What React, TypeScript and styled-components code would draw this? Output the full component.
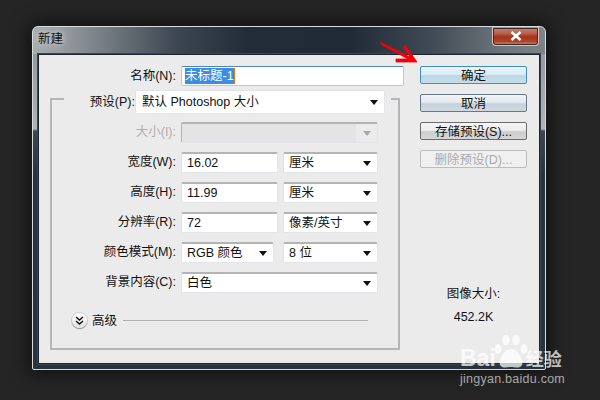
import React from "react";
import styled, { createGlobalStyle } from "styled-components";

const Global = createGlobalStyle`
  html, body { margin: 0; padding: 0; background: #252525; }
  body { width: 600px; height: 400px; overflow: hidden; font-family: "Liberation Sans", "Noto Sans CJK SC", sans-serif; }
`;
const Page = styled.div`
  position: relative; width: 600px; height: 400px; box-sizing: border-box; padding: 26px 0 0 32px;
  background: #252525;
`;
const Win = styled.div`
  width: 514px; height: 344px; box-sizing: border-box; border: 1px solid #d8dcdf; border-radius: 6px 6px 2px 2px;
  padding: 0 5px 5px;
  display: flex; flex-direction: column;
  box-shadow: 0 0 18px 4px rgba(0,0,0,.55);
  background:
    linear-gradient(90deg, #a9adb0 0, #8d9398 8%, #3d4751 28%, #212c38 42%, #202b37 62%, #414b55 78%, #6f767c 92%, #7d8387 100%) top/100% 27px no-repeat,
    linear-gradient(180deg, #8b9196 0, #b0b3b6 102px, #3b4650 104px, #27323d 150px, #28333e 100%);
`;
const Title = styled.div`
  height: 26px; flex: none; display: flex; justify-content: space-between; align-items: flex-start;
  font-size: 12.5px; line-height: 25px; color: #111;
`;
const TitleText = styled.span`
  text-shadow: 0 0 6px #cfd2d4, 0 0 10px #cfd2d4;
`;
const CloseBtn = styled.div`
  width: 47px; height: 19px; box-sizing: border-box; margin-right: 1px; border: 1px solid #d9c7c2; border-top: 0;
  border-radius: 0 0 4px 4px; outline: 1px solid #3a2a26; outline-offset: -2px;
  background: linear-gradient(180deg, #c8897a 0, #b9614c 35%, #a3331c 55%, #ae452d 80%, #c98a75 100%);
  display: flex; align-items: center; justify-content: center;
`;
const Panel = styled.div`
  flex: 1; min-height: 0; background: #ebebeb; border: 1px solid #1d2630; box-shadow: 0 0 0 1px #3a4550;
  position: relative; display: flex; padding: 11px 12px 0 11px; box-sizing: border-box;
  margin-top: 1px; color: #111; font-size: 12.5px;
`;
const Left = styled.div`
  width: 351px; flex: none; display: flex; flex-direction: column;
`;
const NameRow = styled.div`
  display: flex; align-items: center; gap: 5px; height: 20px;
`;
const Label = styled.label<{ $w?: number; $off?: boolean }>`
  width: ${p => p.$w ?? 126}px; flex: none; text-align: right; line-height: 21px; white-space: nowrap;
  color: ${p => (p.$off ? "#aeaeae" : "#111")};
`;
const NameInput = styled.div`
  width: 223px; height: 20px; box-sizing: border-box; margin-right: -5px; background: #fff; flex: none;
  border: 1px solid #aecde6; border-top-color: #4f86b4; border-radius: 2px; padding: 1px 3px;
  line-height: 16px;
`;
const Selected = styled.span`
  display: inline-block; background: #3a8ee6; color: #fff; height: 16px; line-height: 16px; border-right: 1px solid #e5760f;
`;
const GroupHead = styled.div`
  display: flex; align-items: flex-start; height: 24px; margin-top: 4px;
`;
const Cap = styled.div<{ $w: number; $right?: boolean }>`
  width: ${p => p.$w}px; flex: none; height: 16px; margin-top: 8px; box-sizing: border-box;
  border-top: 2px solid #b6b6b6;
  ${p => (p.$right ? "border-right: 2px solid #b6b6b6; margin-left: 6px;" : "border-left: 2px solid #b6b6b6;")}
`;
const PresetLabel = styled.label`
  width: 71px; flex: none; text-align: right; line-height: 25px; white-space: nowrap; margin-right: 0;
`;
const Group = styled.div`
  width: 350px; height: 236px; box-sizing: border-box; border: 2px solid #b6b6b6; border-top: 0;
  display: flex; flex-direction: column; padding-top: 8px;
`;
const Row = styled.div<{ $mt?: number }>`
  display: flex; align-items: center; gap: 5px; height: 21px; margin-top: ${p => p.$mt ?? 9}px;
`;
const Box = styled.div<{ $w: number; $off?: boolean; $h?: number; $ml?: number }>`
  width: ${p => p.$w}px; height: ${p => p.$h ?? 21}px; box-sizing: border-box; flex: none; display: flex; align-items: center;
  justify-content: space-between; padding: 0 5px 0 5px; white-space: nowrap; line-height: 18px;
  margin-left: ${p => p.$ml ?? 0}px;
  background: ${p => (p.$off ? "linear-gradient(90deg, #e4e4e4 0, #e4e4e4 89%, #ebebeb 89%)" : "#fff")};
  border: 1px solid #e2e5ea; border-top: 2px solid ${p => (p.$off ? "#b3b3b3" : "#b4b4b4")}; border-left: 1px solid ${p => (p.$off ? "#b3b3b3" : "#dfe2e6")};
  border-radius: 2px;
`;
const Tri = styled.i<{ $off?: boolean }>`
  display: block; width: 0; height: 0; flex: none; margin-right: 1px;
  border: 4px solid transparent; border-bottom: 0;
  border-top: 5px solid ${p => (p.$off ? "#a9a9a9" : "#111")};
`;
const PresetBox = styled(Box)`
  border-top: 1px solid #dfe2e6; padding-left: 6px;
`;
const Advanced = styled.div`
  display: flex; align-items: center; height: 18px; margin-top: 18px; padding-left: 20px; gap: 5px;
`;
const Chevron = styled.div`
  width: 15px; height: 15px; border-radius: 50%; flex: none;
  background: linear-gradient(180deg, #fff, #e2e2e2); box-shadow: 0 1px 1px #8a8a8a, 0 0 0 1px #d0d0d0;
  display: flex; align-items: center; justify-content: center;
`;
const AdvLabel = styled.span`
  line-height: 18px; white-space: nowrap; padding-top: 2px;
`;
const Rule = styled.div`
  width: 245px; height: 1px; background: #b0b0b0; margin-left: 1px;
`;
const Right = styled.div`
  margin-left: 19px; width: 107px; flex: none; display: flex; flex-direction: column; align-items: stretch;
`;
const Btn = styled.div<{ $kind: "default" | "blue" | "gray" | "off" }>`
  height: 18px; box-sizing: border-box; margin-bottom: 10px; text-align: center; line-height: 18px; white-space: nowrap;
  border-radius: 2px;
  border: 1px solid ${p => ({ default: "#3d8fc4", blue: "#67788a", gray: "#6b6b6b", off: "#bdbdbd" }[p.$kind])};
  color: ${p => (p.$kind === "off" ? "#aaa" : "#111")};
  background: ${p => ({
    default: "linear-gradient(180deg,#eaf5fa 0,#dcedf4 45%,#bcd6e4 55%,#c6dfeb 100%)",
    blue: "linear-gradient(180deg,#f0f3f6 0,#e5eaee 45%,#c5d1da 55%,#cfd9e0 100%)",
    gray: "linear-gradient(180deg,#f6f6f6 0,#ededed 45%,#cdcdcd 55%,#d6d6d6 100%)",
    off: "#f0f0f0",
  }[p.$kind])};
`;
const Size = styled.div`
  text-align: center; margin-top: 107px; line-height: 18px;
`;
const SizeVal = styled.div`
  text-align: center; margin-top: 5px; line-height: 18px;
`;
const Arrow = styled.svg`
  position: absolute; left: 378px; top: 40px; width: 42px; height: 24px;
`;
const Mark = styled.div`
  position: absolute; left: 460px; top: 334px; width: 140px; color: rgba(255,255,255,.72);
`;
const MarkTop = styled.div`
  display: flex; align-items: flex-end; height: 36px;
  font-weight: 700; font-size: 23px; line-height: 24px;
`;
const MarkBai = styled.span`
  margin-right: -3px;
`;
const MarkCn = styled.span`
  font-family: "Noto Sans CJK SC", sans-serif; font-weight: 700; font-size: 18px; margin-left: -3px; line-height: 24px;
`;
const MarkUrl = styled.div`
  font-size: 12.5px; line-height: 15px; margin-top: 2px; letter-spacing: .25px; color: rgba(255,255,255,.62);
`;

function SelectBox({ w, text, off, ml }: { w: number; text?: string; off?: boolean; ml?: number }) {
  return <Box $w={w} $off={off} $ml={ml}><span>{text}</span><Tri $off={off} /></Box>;
}

export default function App() {
  return (
    <Page>
      <Global />
      <Win>
        <Title>
          <TitleText>新建</TitleText>
          <CloseBtn>
            <svg width="12" height="10" viewBox="0 0 12 10"><path d="M1.5 1 L10.5 9 M10.5 1 L1.5 9" stroke="#fff" strokeWidth="2.6" /></svg>
          </CloseBtn>
        </Title>
        <Panel>
          <Left>
            <NameRow>
              <Label>名称(N):</Label>
              <NameInput><Selected>未标题-1</Selected></NameInput>
            </NameRow>
            <GroupHead>
              <Cap $w={14} />
              <PresetLabel>预设(P):</PresetLabel>
              <PresetBox $w={250} $h={24}><span>默认 Photoshop 大小</span><Tri /></PresetBox>
              <Cap $w={9} $right />
            </GroupHead>
            <Group>
              <Row $mt={0}><Label $w={124} $off>大小(I):</Label><SelectBox w={197} off /></Row>
              <Row><Label $w={124}>宽度(W):</Label><Box $w={97}>16.02</Box><SelectBox w={95} text="厘米" /></Row>
              <Row><Label $w={124}>高度(H):</Label><Box $w={97}>11.99</Box><SelectBox w={95} text="厘米" /></Row>
              <Row><Label $w={124}>分辨率(R):</Label><Box $w={97}>72</Box><SelectBox w={95} text="像素/英寸" /></Row>
              <Row><Label $w={124}>颜色模式(M):</Label><SelectBox w={93} text="RGB 颜色" /><SelectBox w={95} text="8 位" ml={4} /></Row>
              <Row><Label $w={124}>背景内容(C):</Label><SelectBox w={197} text="白色" /></Row>
              <Advanced>
                <Chevron>
                  <svg width="9" height="9" viewBox="0 0 9 9"><path d="M1 1 L4.5 4 L8 1 M1 5 L4.5 8 L8 5" fill="none" stroke="#111" strokeWidth="1.5" /></svg>
                </Chevron>
                <AdvLabel>高级</AdvLabel>
                <Rule />
              </Advanced>
            </Group>
          </Left>
          <Right>
            <Btn $kind="default">确定</Btn>
            <Btn $kind="blue">取消</Btn>
            <Btn $kind="gray">存储预设(S)...</Btn>
            <Btn $kind="off">删除预设(D)...</Btn>
            <Size>图像大小:</Size>
            <SizeVal>452.2K</SizeVal>
          </Right>
        </Panel>
      </Win>
      <Arrow viewBox="0 0 42 24">
        <path d="M2 2 L4 5 L30 19 L18 19 L18 22 L39 22 L27 5 L25 7 L32 17 Z" fill="#f4000a" stroke="#f4000a" strokeWidth="0.8" />
      </Arrow>
      <Mark>
        <MarkTop>
          <MarkBai>Bai</MarkBai>
          <svg width="36" height="36" viewBox="0 0 36 36" fill="currentColor">
            <ellipse cx="5" cy="15" rx="3.4" ry="5" />
            <ellipse cx="13" cy="6" rx="3.8" ry="5.2" />
            <ellipse cx="23" cy="6" rx="3.8" ry="5.2" />
            <ellipse cx="31" cy="15" rx="3.4" ry="5" />
            <path d="M18 15 C12 15 5 25 7 31 C9 35 15 33 18 33 C21 33 27 35 29 31 C31 25 24 15 18 15 Z" />
          </svg>
          <MarkCn>经验</MarkCn>
        </MarkTop>
        <MarkUrl>jingyan.baidu.com</MarkUrl>
      </Mark>
    </Page>
  );
}
